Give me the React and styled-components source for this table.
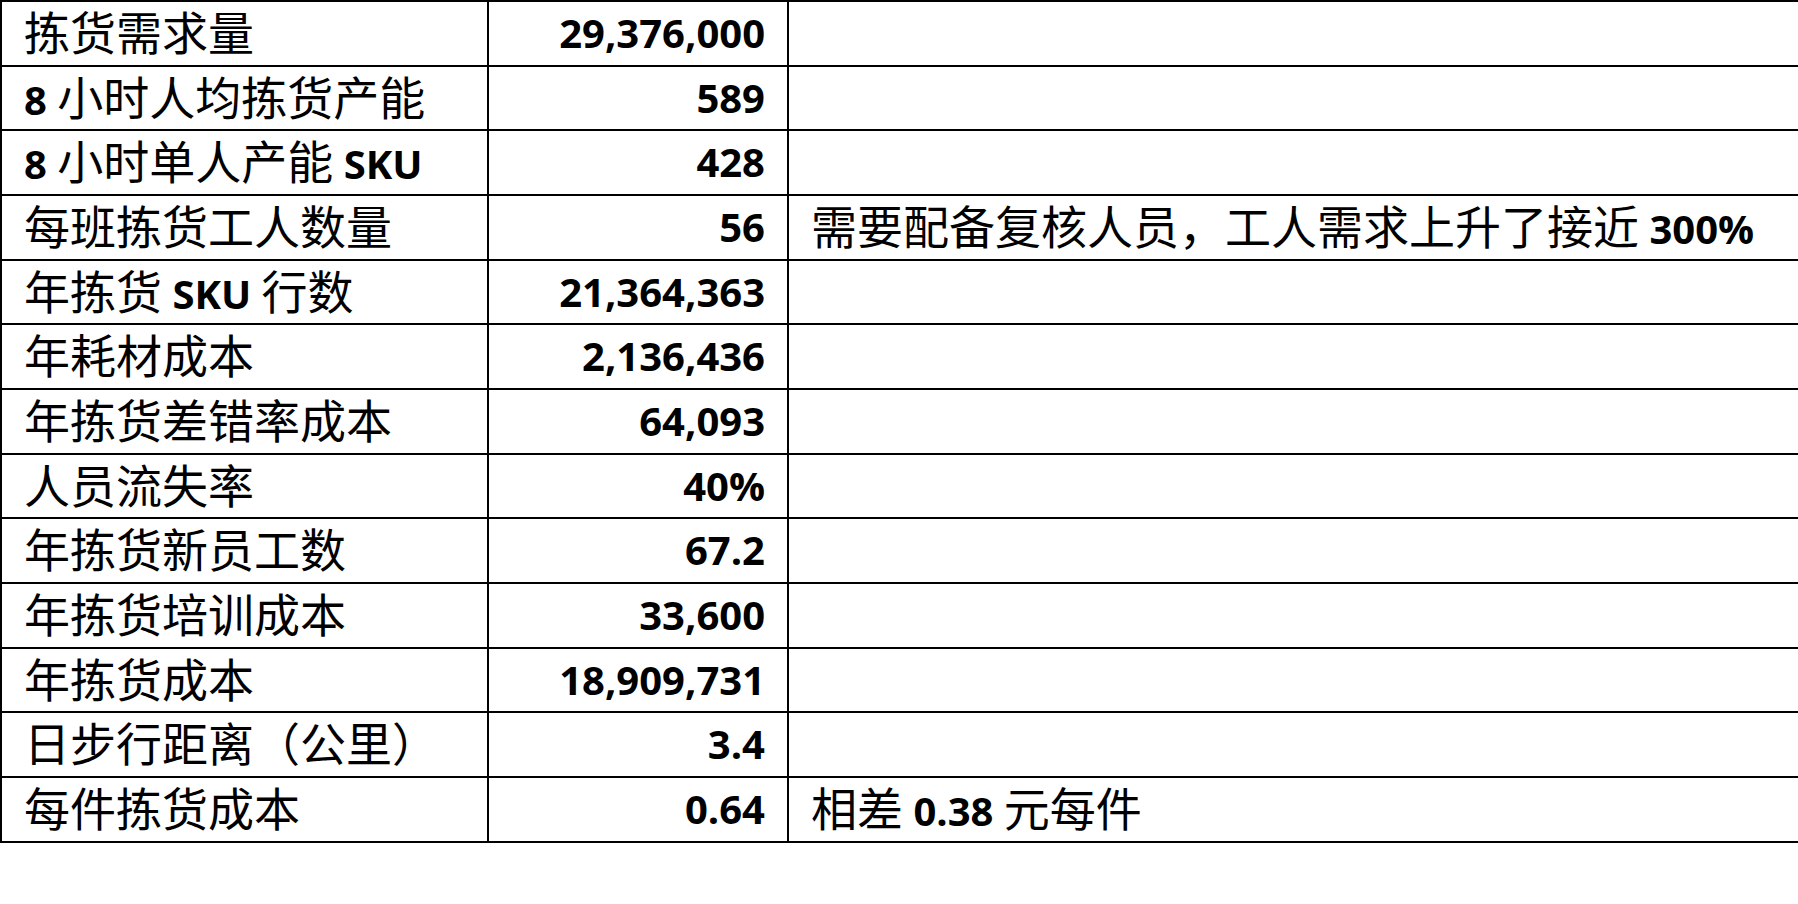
import React from "react";
import styled, { createGlobalStyle } from "styled-components";

const Global = createGlobalStyle`
  html, body {
    margin: 0;
    padding: 0;
    background: #ffffff;
    overflow: hidden;
  }
  body {
    font-family: "Open Sans", "Noto Sans CJK SC", sans-serif;
    color: #000;
  }
`;

const Table = styled.div`
  width: 1830px;
  border-top: 2px solid #000;
  border-left: 2px solid #000;
  display: flex;
  flex-direction: column;
`;

const Row = styled.div`
  display: grid;
  grid-template-columns: 487px 300px 1fr;
  border-bottom: 2px solid #000;
`;

const Cell = styled.div`
  height: 62.67px;
  border-right: 2px solid #000;
  font-family: "Open Sans", "Noto Sans CJK SC", sans-serif;
  font-size: 45px;
  font-weight: 400;
  line-height: 57.4px;
  white-space: nowrap;
  color: #000;
  text-align: ${(p) => (p.$align === "right" ? "right" : "left")};
  padding: ${(p) => (p.$align === "right" ? "0 22px 0 0" : "0 0 0 22px")};
`;

const Latin = styled.span`
  font-family: "Open Sans", "Liberation Sans", sans-serif;
  font-size: 40px;
  font-weight: 700;
  letter-spacing: 0;
`;

const Cjk = styled.span`
  font-family: "Noto Sans CJK SC", sans-serif;
  font-size: 46px;
  font-weight: 400;
`;

const rows = [
  ["拣货需求量", "29,376,000", ""],
  ["8 小时人均拣货产能", "589", ""],
  ["8 小时单人产能 SKU", "428", ""],
  ["每班拣货工人数量", "56", "需要配备复核人员，工人需求上升了接近 300%"],
  ["年拣货 SKU 行数", "21,364,363", ""],
  ["年耗材成本", "2,136,436", ""],
  ["年拣货差错率成本", "64,093", ""],
  ["人员流失率", "40%", ""],
  ["年拣货新员工数", "67.2", ""],
  ["年拣货培训成本", "33,600", ""],
  ["年拣货成本", "18,909,731", ""],
  ["日步行距离（公里）", "3.4", ""],
  ["每件拣货成本", "0.64", "相差 0.38 元每件"],
];

function Mixed({ text }) {
  const parts = text.split(/([\x00-\x7F]+)/).filter((s) => s.length);
  return parts.map((s, i) =>
    /^[\x00-\x7F]+$/.test(s) ? <Latin key={i}>{s}</Latin> : <Cjk key={i}>{s}</Cjk>
  );
}

export default function App() {
  return (
    <>
      <Global />
      <Table>
        {rows.map((r, i) => (
          <Row key={i}>
            <Cell>
              <Mixed text={r[0]} />
            </Cell>
            <Cell $align="right">
              <Mixed text={r[1]} />
            </Cell>
            <Cell>
              <Mixed text={r[2]} />
            </Cell>
          </Row>
        ))}
      </Table>
    </>
  );
}
